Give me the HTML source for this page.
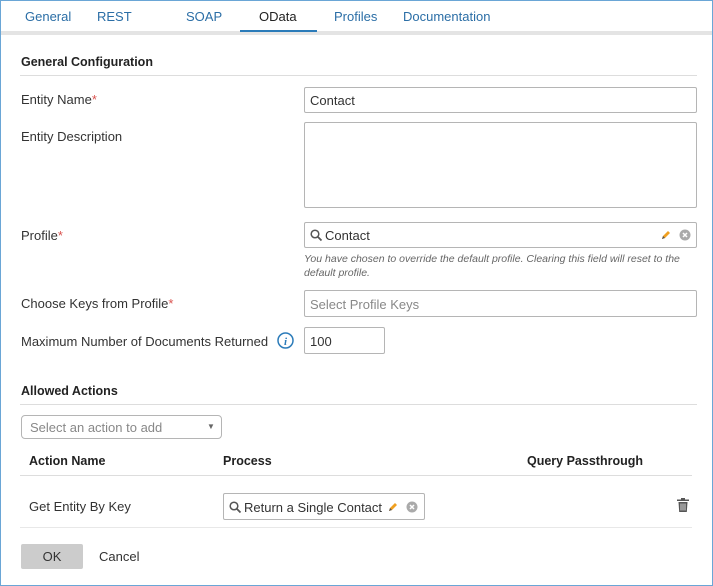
<!DOCTYPE html>
<html><head><style>
*{margin:0;padding:0;box-sizing:border-box}
body{width:713px;height:586px;position:relative;background:#fff;font-family:"Liberation Sans",sans-serif;font-size:13px;color:#333;overflow:hidden}
.frame{position:absolute;left:0;top:0;width:713px;height:586px;border:1px solid #6aa6d6}
.a{position:absolute;white-space:nowrap}
.tab{position:absolute;top:9px;color:#2b6ea6;font-size:13px}
.in{position:absolute;border:1px solid #b5b5b5;border-radius:2px;background:#fff}
.b{font-weight:bold;color:#222;font-size:12.5px}
.req{color:#d9534f}
.line{position:absolute;height:1px;background:#ddd}
</style></head><body>
<div class="frame"></div>
<div class="a" style="left:1px;top:31px;width:711px;height:4px;background:#e4e4e4"></div>
<div class="tab" style="left:25px">General</div>
<div class="tab" style="left:97px">REST</div>
<div class="tab" style="left:186px">SOAP</div>
<div class="tab" style="left:259px;color:#222">OData</div>
<div class="a" style="left:240px;top:30px;width:77px;height:2px;background:#2b7bb9"></div>
<div class="tab" style="left:334px">Profiles</div>
<div class="tab" style="left:403px">Documentation</div>

<div class="a b" style="left:21px;top:55px">General Configuration</div>
<div class="line" style="left:20px;top:75px;width:677px"></div>

<div class="a" style="left:21px;top:92px">Entity Name<span class="req">*</span></div>
<div class="in" style="left:304px;top:87px;width:393px;height:26px"><span class="a" style="left:5px;top:5px">Contact</span></div>

<div class="a" style="left:21px;top:129px">Entity Description</div>
<div class="in" style="left:304px;top:122px;width:393px;height:86px"></div>

<div class="a" style="left:21px;top:228px">Profile<span class="req">*</span></div>
<div class="in" style="left:304px;top:222px;width:393px;height:26px">
<svg class="a" style="left:5px;top:6px" width="13" height="13" viewBox="0 0 13 13"><circle cx="5" cy="5" r="3.8" fill="none" stroke="#555" stroke-width="1.5"/><path d="M8 8l3.5 3.5" stroke="#555" stroke-width="1.8"/></svg>
<span class="a" style="left:20px;top:5px">Contact</span>
<svg class="a" style="left:355px;top:6px" width="12" height="12" viewBox="0 0 12 12"><path d="M2 10l1-3 5-5 2 2-5 5z" fill="#f0a020"/><path d="M2 10l1-3 2 2z" fill="#555"/></svg>
<svg class="a" style="left:374px;top:6px" width="12" height="12" viewBox="0 0 12 12"><circle cx="6" cy="6" r="5.5" fill="#aaa"/><path d="M4 4l4 4M8 4l-4 4" stroke="#fff" stroke-width="1.5"/></svg>
</div>
<div class="a" style="left:304px;top:252px;font-size:10.5px;font-style:italic;color:#666;line-height:14px">You have chosen to override the default profile. Clearing this field will reset to the<br>default profile.</div>

<div class="a" style="left:21px;top:296px">Choose Keys from Profile<span class="req">*</span></div>
<div class="in" style="left:304px;top:290px;width:393px;height:27px"><span class="a" style="left:5px;top:6px;color:#888">Select Profile Keys</span></div>

<div class="a" style="left:21px;top:334px">Maximum Number of Documents Returned</div>
<svg class="a" style="left:277px;top:332px" width="17" height="17" viewBox="0 0 17 17"><circle cx="8.5" cy="8.5" r="7.5" fill="#fff" stroke="#2b7bb9" stroke-width="1.5"/><text x="8.5" y="13" font-size="11" font-weight="bold" font-style="italic" text-anchor="middle" fill="#2b7bb9" font-family="Liberation Serif,serif">i</text></svg>
<div class="in" style="left:304px;top:327px;width:81px;height:27px"><span class="a" style="left:5px;top:6px">100</span></div>

<div class="a b" style="left:21px;top:384px">Allowed Actions</div>
<div class="line" style="left:20px;top:404px;width:677px"></div>

<div class="in" style="left:21px;top:415px;width:201px;height:24px;border-radius:4px"><span class="a" style="left:8px;top:4px;color:#888">Select an action to add</span><span class="a" style="left:185px;top:6px;font-size:8px;color:#666">▼</span></div>

<div class="a b" style="left:29px;top:454px">Action Name</div>
<div class="a b" style="left:223px;top:454px">Process</div>
<div class="a b" style="left:527px;top:454px">Query Passthrough</div>
<div class="line" style="left:20px;top:475px;width:672px"></div>

<div class="a" style="left:29px;top:499px">Get Entity By Key</div>
<div class="in" style="left:223px;top:493px;width:202px;height:27px">
<svg class="a" style="left:5px;top:7px" width="13" height="13" viewBox="0 0 13 13"><circle cx="5" cy="5" r="3.8" fill="none" stroke="#555" stroke-width="1.5"/><path d="M8 8l3.5 3.5" stroke="#555" stroke-width="1.8"/></svg>
<span class="a" style="left:20px;top:6px">Return a Single Contact</span>
<svg class="a" style="left:163px;top:7px" width="12" height="12" viewBox="0 0 12 12"><path d="M2 10l1-3 5-5 2 2-5 5z" fill="#f0a020"/><path d="M2 10l1-3 2 2z" fill="#555"/></svg>
<svg class="a" style="left:182px;top:7px" width="12" height="12" viewBox="0 0 12 12"><circle cx="6" cy="6" r="5.5" fill="#aaa"/><path d="M4 4l4 4M8 4l-4 4" stroke="#fff" stroke-width="1.5"/></svg>
</div>
<svg class="a" style="left:677px;top:498px" width="12" height="14" viewBox="0 0 12 14"><rect x="0" y="1.5" width="12" height="1.5" fill="#555"/><rect x="4" y="0" width="4" height="2" fill="#555"/><path d="M1.5 4h9l-0.7 10h-7.6z" fill="#555"/><path d="M4 5.5v7M6 5.5v7M8 5.5v7" stroke="#fff" stroke-width="0.8"/></svg>
<div class="line" style="left:20px;top:527px;width:672px;background:#e8e8e8"></div>

<div class="a" style="left:21px;top:544px;width:62px;height:25px;background:#ccc;border-radius:2px;text-align:center;line-height:25px;color:#333">OK</div>
<div class="a" style="left:99px;top:549px;color:#333">Cancel</div>
</body></html>
